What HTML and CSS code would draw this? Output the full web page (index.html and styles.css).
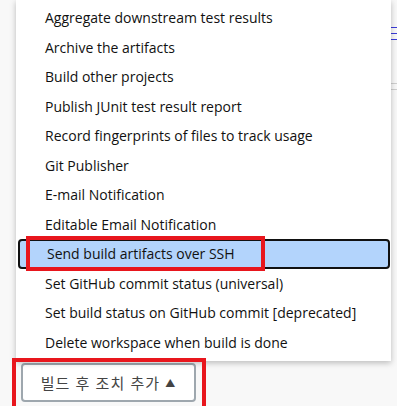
FILE: index.html
```html
<!DOCTYPE html>
<html lang="ko">
<head>
  <meta charset="UTF-8" />
  <title>Post-build actions</title>
  <link rel="stylesheet" href="styles.css">
</head>
<body>

  <div class="page">
    <div class="page-edge">
      <span class="edge-link"></span>
      <span class="edge-link"></span>
      <span class="edge-link"></span>
      <span class="edge-rule"></span>
      <span class="edge-rule"></span>
    </div>

    <ul class="menu">
      <li>Aggregate downstream test results</li>
      <li>Archive the artifacts</li>
      <li>Build other projects</li>
      <li>Publish JUnit test result report</li>
      <li>Record fingerprints of files to track usage</li>
      <li>Git Publisher</li>
      <li>E-mail Notification</li>
      <li>Editable Email Notification</li>
      <li class="active">Send build artifacts over SSH</li>
      <li>Set GitHub commit status (universal)</li>
      <li>Set build status on GitHub commit [deprecated]</li>
      <li>Delete workspace when build is done</li>
    </ul>

    <div class="actions">
      <button class="add-btn">빌드 후 조치 추가 <span class="caret">▲</span></button>
    </div>

    <!-- annotation boxes -->
    <div class="mark mark-item"></div>
    <div class="mark mark-btn"></div>
  </div>

</body>
</html>
```

FILE: styles.css
```css
body {
  margin: 0;
  background: #f8f8f8;
  font-family: 'Open Sans', 'Noto Sans', sans-serif;
  overflow: hidden;
}
.page {
  position: relative;
  width: 397px;
  height: 406px;
}
.page-edge {
  position: absolute;
  top: 0;
  right: 0;
  width: 6px;
  height: 406px;
}
.edge-link {
  position: absolute;
  left: 0;
  width: 6px;
  height: 1px;
  background: #3b3bd8;
}
.edge-link:nth-child(1) { top: 27px; }
.edge-link:nth-child(2) { top: 33px; }
.edge-link:nth-child(3) { top: 39px; }
.edge-rule {
  position: absolute;
  left: 0;
  width: 6px;
  height: 1px;
  background: #cfcfcf;
}
.edge-rule:nth-child(4) { top: 83px; }
.edge-rule:nth-child(5) { top: 89px; }

.menu {
  list-style: none;
  margin: 0 0 0 16px;
  padding: 3px 0 4px;
  width: 375px;
  background: #fff;
  box-shadow: 0 2px 6px rgba(0, 0, 0, 0.25);
  position: relative;
  z-index: 1;
  box-sizing: border-box;
}
.menu li {
  height: 29.5px;
  line-height: 29.5px;
  padding-left: 29px;
  font-size: 14px;
  color: #111;
  white-space: nowrap;
  box-sizing: border-box;
}
.menu li.active {
  background: #b3d4fc;
  border: 2px solid #111;
  border-radius: 4px;
  line-height: 25.5px;
  padding-left: 27px;
  margin: 0 1px 0 2px;
}

.actions {
  padding: 2px 0 0 21px;
}
.add-btn {
  width: 175px;
  height: 39px;
  background: #fff;
  border: 2px solid #9ea7ae;
  border-radius: 4px;
  font-family: 'Noto Sans CJK KR', sans-serif;
  font-size: 15px;
  color: #444;
  letter-spacing: 1px;
}
.caret {
  font-size: 10px;
  vertical-align: 2px;
}

.mark {
  position: absolute;
  border: 4px solid #e8161d;
  z-index: 2;
  box-sizing: border-box;
}
.mark-item {
  left: 26px;
  top: 236px;
  width: 239px;
  height: 35px;
}
.mark-btn {
  left: 12px;
  top: 358px;
  width: 194px;
  height: 52px;
}
```
